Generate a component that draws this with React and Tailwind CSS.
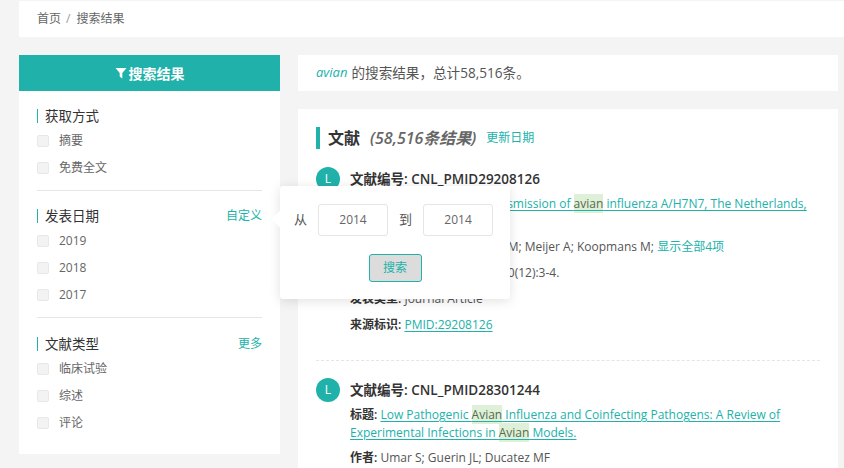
const FONT = "font-['Open_Sans','Noto_Sans_CJK_SC',sans-serif]";

function Check({ label }) {
  return (
    <label className="flex h-[27px] items-center pb-px text-[12px] text-[#666]">
      <span className="h-3 w-3 rounded-[2px] border border-[#e8e8e8] bg-[#f3f3f3]" />
      <span className="ml-[10px]">{label}</span>
    </label>
  );
}

function Group({ title, action, items, last }) {
  return (
    <div className={last ? "pt-[19px]" : "border-b border-[#e5e5e5] pb-2 pt-[18px]"}>
      <div className="mb-[5px] flex h-[14px] items-center justify-between">
        <h3 className="border-l border-[#20b2aa] pl-[7px] text-[13.5px] leading-[14px] font-normal text-[#333]">{title}</h3>
        {action && <a className="text-[12px] text-[#20b2aa]">{action}</a>}
      </div>
      {items.map((i) => <Check key={i} label={i} />)}
    </div>
  );
}

function Mark({ children }) {
  return <mark className="bg-[#dff0d8] py-px text-[#556b4f] underline decoration-[#20b2aa] underline-offset-2">{children}</mark>;
}

function Field({ label, children, className = "" }) {
  return (
    <p className={`text-[12px] leading-[18px] text-[#555] ${className}`}>
      <b className="font-semibold text-[#333]">{label}: </b>
      {children}
    </p>
  );
}

function TitleLink({ children }) {
  return <a className="text-[#20b2aa] underline underline-offset-2">{children}</a>;
}

function Record({ id, title, authors, more, source, type, ident }) {
  return (
    <article className="flex gap-[10px]">
      <div className="flex h-6 w-6 shrink-0 items-center justify-center rounded-full bg-[#20b2aa] text-[12px] text-white">L</div>
      <div className="min-w-0 flex-1">
        <h4 className="text-[13.5px] leading-6 font-semibold text-[#333]">文献编号: {id}</h4>
        <Field label="标题" className="mt-[4px]"><TitleLink>{title}</TitleLink></Field>
        <Field label="作者" className="mt-[7px]">
          {authors}
          {more && <a className="text-[#20b2aa]"> {more}</a>}
        </Field>
        {source && <Field label="来源" className="mt-[8px]">{source}</Field>}
        {type && <Field label="发表类型" className="mt-[8px]">{type}</Field>}
        {ident && <Field label="来源标识" className="mt-[8px]"><TitleLink>{ident}</TitleLink></Field>}
      </div>
    </article>
  );
}

export default function App() {
  return (
    <div className={`${FONT} relative h-[468px] overflow-hidden bg-[#f4f4f4] pl-[19px]`}>
      <nav className="mt-px flex h-9 items-center bg-white pl-[18px] text-[12px] text-[#666]">
        <span>首页</span>
        <span className="ml-[5px] mr-[6px] text-[#999]">/</span>
        <span>搜索结果</span>
      </nav>

      <div className="mt-[18px] flex gap-[18px] pr-[6px]">
        <aside className="w-[261px] shrink-0">
          <div className="flex h-9 items-center justify-center bg-[#20b2aa] text-[14px] font-semibold text-white">
            <svg viewBox="0 0 12 12" className="mr-[2px] h-3 w-3" fill="currentColor"><path d="M0.5 1h11L7.3 6v5.5L4.7 9.6V6z" /></svg>
            搜索结果
          </div>
          <div className="h-[363px] bg-white px-[18px]">
            <Group title="获取方式" items={["摘要", "免费全文"]} />
            <Group title="发表日期" action="自定义" items={["2019", "2018", "2017"]} />
            <Group title="文献类型" action="更多" items={["临床试验", "综述", "评论"]} last />
          </div>
        </aside>

        <main className="min-w-0 flex-1">
          <div className="flex h-9 items-center bg-white pl-[18px] text-[13.6px] text-[#555]">
            <em className="mr-1 text-[13px] text-[#20b2aa]">avian</em>的搜索结果，总计58,516条。
          </div>
          <section className="mt-[18px] h-[400px] bg-white px-[18px] pt-[18px]">
            <div className="flex h-[22px] items-center">
              <span className="h-[22px] w-1 bg-[#20b2aa]" />
              <h2 className="ml-2 text-[16px] font-semibold text-[#333]">文献</h2>
              <em className="ml-[10px] text-[16px] font-semibold text-[#666]">(58,516条结果)</em>
              <a className="ml-[10px] text-[12px] text-[#20b2aa]">更新日期</a>
            </div>
            <div className="mt-[18px]">
              <Record
                id="CNL_PMID29208126"
                title={<>Possible Zoonotic Transmission of <Mark>avian</Mark> influenza A/H7N7, The Netherlands, 2003.</>}
                authors="Fouchier RA; de Brun EM; Meijer A; Koopmans M;"
                more="显示全部4项"
                source="Euro Surveil. 2017 Jul;20(12):3-4."
                type="Journal Article"
                ident="PMID:29208126"
              />
            </div>
            <div className="mb-[17px] mt-[26px] border-t border-dashed border-[#e5e5e5]" />
            <Record
              id="CNL_PMID28301244"
              title={<>Low Pathogenic <Mark>Avian</Mark> Influenza and Coinfecting Pathogens: A Review of Experimental Infections in <Mark>Avian</Mark> Models.</>}
              authors="Umar S; Guerin JL; Ducatez MF"
            />
          </section>
        </main>
      </div>

      <div className="absolute left-[280px] top-[186px] h-[113px] w-[230px] rounded-[3px] bg-white shadow-[0_2px_12px_rgba(0,0,0,0.12)]">
        <span className="absolute -left-[6px] top-[27px] h-3 w-3 rotate-45 bg-white" />
        <div className="mt-[18px] flex items-center pl-[14px] text-[13px] text-[#555]">
          <span>从</span>
          <span className="ml-[11px] flex h-8 w-[70px] items-center justify-center rounded-[3px] border border-[#e5e5e5] text-[12px] text-[#666]">2014</span>
          <span className="ml-[11px]">到</span>
          <span className="ml-[11px] flex h-8 w-[70px] items-center justify-center rounded-[3px] border border-[#e5e5e5] text-[12px] text-[#666]">2014</span>
        </div>
        <div className="mt-[18px] flex justify-center">
          <button className="h-7 w-[53px] rounded-[3px] border border-[#20b2aa] bg-[#dcdcdc] text-[12px] text-[#20b2aa]">搜索</button>
        </div>
      </div>
    </div>
  );
}
